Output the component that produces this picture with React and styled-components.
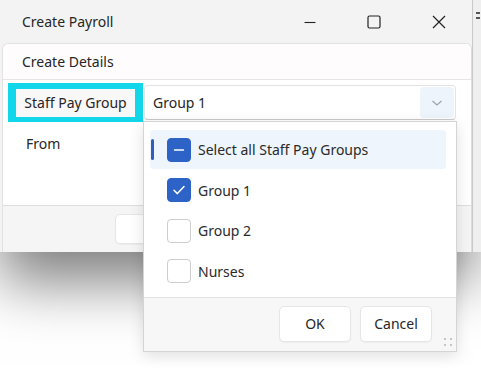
import React from "react";
import styled, { createGlobalStyle } from "styled-components";

const Global = createGlobalStyle`
  html, body { margin: 0; padding: 0; background: #ffffff; }
  body { font-family: "Noto Sans", "Open Sans", sans-serif; color: #262626; }
  * { box-sizing: border-box; }
`;

const Page = styled.div`
  position: relative;
  width: 481px;
  height: 385px;
  overflow: hidden;
  background: #ffffff;
`;

const Top = styled.div`
  display: flex;
  align-items: flex-start;
`;

const Window = styled.div`
  width: 473px;
  height: 252px;
  background: #f3f3f3;
  border-right: 1px solid #c9c9c9;
  display: flex;
  flex-direction: column;
  box-shadow: 0 30px 55px rgba(0, 0, 0, 0.5);
  position: relative;
  z-index: 1;
`;

const Behind = styled.div`
  flex: 1;
  height: 252px;
  background: #efefef;
  display: flex;
  flex-direction: column;
  gap: 3px;
  padding: 12px 0 0 3px;
  position: relative;
  z-index: 2;
`;

const Dash = styled.span`
  display: block;
  width: 4px;
  height: 2px;
  background: #555;
`;

const TitleBar = styled.div`
  height: 43px;
  display: flex;
  align-items: center;
  padding-left: 22px;
  font-size: 14px;
  color: #262626;
`;

const Title = styled.span`
  flex: 1;
`;

const Controls = styled.div`
  display: flex;
  align-items: center;
  height: 100%;
`;

const Ctrl = styled.div`
  width: ${(p) => p.$w}px;
  height: 100%;
  display: flex;
  align-items: center;
  justify-content: center;
`;

const Card = styled.div`
  flex: 1;
  margin: 0 0 0 2px;
  background: #ffffff;
  border: 1px solid #e2e2e2;
  border-bottom: none;
  border-right-color: #dcdcdc;
  border-radius: 6px 6px 0 0;
  display: flex;
  flex-direction: column;
`;

const CardHeader = styled.div`
  height: 36px;
  display: flex;
  align-items: center;
  padding-left: 19px;
  font-size: 14px;
  color: #262626;
  background: #fefcfd;
  border-bottom: 1px solid #e6e6e6;
  border-radius: 6px 6px 0 0;
`;

const Form = styled.div`
  flex: 1;
  display: flex;
  flex-direction: column;
  padding: 2px 15px 0 5px;
`;

const Row = styled.div`
  display: flex;
  align-items: center;
  height: ${(p) => p.$h}px;
`;

const Highlight = styled.div`
  width: 135px;
  height: 39px;
  background: #12d6e9;
  display: flex;
  align-items: center;
  justify-content: center;
`;

const LabelBox = styled.div`
  width: 119px;
  height: 28px;
  background: #f8f8f8;
  display: flex;
  align-items: center;
  justify-content: center;
  font-size: 14px;
  color: #262626;
  white-space: nowrap;
`;

const PlainLabel = styled.div`
  padding-left: 18px;
  font-size: 14px;
  color: #262626;
`;

const Combo = styled.div`
  flex: 1;
  height: 35px;
  margin-left: 1px;
  border: 1px solid #e3e3e3;
  border-bottom-color: #c9c9c9;
  border-radius: 4px;
  background: #fff;
  display: flex;
  align-items: center;
  padding: 0 1px 0 8px;
  font-size: 14px;
`;

const ComboText = styled.span`
  flex: 1;
`;

const ComboBtn = styled.div`
  width: 34px;
  height: 31px;
  border-radius: 4px;
  background: #eef4fb;
  display: flex;
  align-items: center;
  justify-content: center;
`;

const Footer = styled.div`
  height: 47px;
  background: #f5f5f5;
  border-top: 1px solid #dedede;
  display: flex;
  align-items: center;
  padding-left: 112px;
`;

const Button = styled.div`
  width: ${(p) => p.$w}px;
  height: ${(p) => p.$h}px;
  background: #ffffff;
  border: 1px solid #e6e6e6;
  border-radius: 5px;
  display: flex;
  align-items: center;
  justify-content: center;
  font-size: 14px;
  color: #262626;
  box-shadow: 0 1px 1px rgba(0, 0, 0, 0.04);
`;

const Popup = styled.div`
  position: absolute;
  left: 143px;
  top: 121px;
  width: 314px;
  height: 231px;
  background: #ffffff;
  border: 1px solid #d4d4d4;
  box-shadow: 0 4px 14px rgba(0, 0, 0, 0.12);
  display: flex;
  flex-direction: column;
  z-index: 3;
`;

const List = styled.div`
  flex: 1;
  display: flex;
  flex-direction: column;
  gap: 1.67px;
  padding: 8px 10px 0 6px;
`;

const Item = styled.div`
  position: relative;
  height: 39px;
  display: flex;
  align-items: center;
  gap: 7px;
  padding-left: 17px;
  border-radius: 4px;
  font-size: 14px;
  color: #2a2a2a;
  background: ${(p) => (p.$active ? "#eff5fc" : "transparent")};
`;

const Indicator = styled.span`
  position: absolute;
  left: 1px;
  top: 9px;
  width: 3px;
  height: 21px;
  border-radius: 2px;
  background: #2f5fb9;
`;

const Box = styled.span`
  width: 24px;
  height: 24px;
  border-radius: 4px;
  display: flex;
  align-items: center;
  justify-content: center;
  background: ${(p) => (p.$on ? "#2d63c7" : "#ffffff")};
  border: 1px solid ${(p) => (p.$on ? "#2d63c7" : "#cdcdcd")};
`;

const PopupFooter = styled.div`
  height: 54px;
  background: #f7f7f7;
  border-top: 1px solid #e3e3e3;
  display: flex;
  align-items: center;
  justify-content: flex-end;
  gap: 9px;
  padding: 0 24px 2px 0;
  position: relative;
`;

const Grip = styled.svg`
  position: absolute;
  right: 3px;
  bottom: 4px;
`;

const Minus = () => (
  <svg width="12" height="12" viewBox="0 0 12 12">
    <line x1="1.5" y1="6" x2="10.5" y2="6" stroke="#fff" strokeWidth="1.4" strokeLinecap="round" />
  </svg>
);

const Check = () => (
  <svg width="14" height="14" viewBox="0 0 14 14">
    <path d="M2 7.3 L5.4 10.6 L12 3.6" fill="none" stroke="#fff" strokeWidth="1.5" strokeLinecap="round" strokeLinejoin="round" />
  </svg>
);

const items = [
  { label: "Select all Staff Pay Groups", state: "mixed", active: true },
  { label: "Group 1", state: "on" },
  { label: "Group 2", state: "off" },
  { label: "Nurses", state: "off" },
];

export default function App() {
  return (
    <>
      <Global />
      <Page>
        <Top>
          <Window>
            <TitleBar>
              <Title>Create Payroll</Title>
              <Controls>
                <Ctrl $w={64}>
                  <svg width="12" height="12" viewBox="0 0 12 12">
                    <line x1="0.5" y1="6.5" x2="11.5" y2="6.5" stroke="#222" strokeWidth="1.1" />
                  </svg>
                </Ctrl>
                <Ctrl $w={64}>
                  <svg width="14" height="14" viewBox="0 0 14 14">
                    <rect x="1" y="1" width="12" height="12" rx="1.5" fill="none" stroke="#222" strokeWidth="1.2" />
                  </svg>
                </Ctrl>
                <Ctrl $w={66}>
                  <svg width="14" height="14" viewBox="0 0 14 14">
                    <path d="M1 1 L13 13 M13 1 L1 13" stroke="#222" strokeWidth="1.2" />
                  </svg>
                </Ctrl>
              </Controls>
            </TitleBar>
            <Card>
              <CardHeader>Create Details</CardHeader>
              <Form>
                <Row $h={41}>
                  <Highlight>
                    <LabelBox>Staff Pay Group</LabelBox>
                  </Highlight>
                  <Combo>
                    <ComboText>Group 1</ComboText>
                    <ComboBtn>
                      <svg width="12" height="8" viewBox="0 0 12 8">
                        <path d="M1.5 2 L6 6 L10.5 2" fill="none" stroke="#9aa3ad" strokeWidth="1.2" />
                      </svg>
                    </ComboBtn>
                  </Combo>
                </Row>
                <Row $h={40}>
                  <PlainLabel>From</PlainLabel>
                </Row>
              </Form>
              <Footer>
                <Button $w={80} $h={30} />
              </Footer>
            </Card>
          </Window>
          <Behind>
            <Dash />
            <Dash />
          </Behind>
        </Top>
        <Popup>
          <List>
            {items.map((it) => (
              <Item key={it.label} $active={it.active}>
                {it.active && <Indicator />}
                <Box $on={it.state !== "off"}>
                  {it.state === "mixed" && <Minus />}
                  {it.state === "on" && <Check />}
                </Box>
                {it.label}
              </Item>
            ))}
          </List>
          <PopupFooter>
            <Button $w={72} $h={36}>OK</Button>
            <Button $w={72} $h={36}>Cancel</Button>
            <Grip width="10" height="10" viewBox="0 0 10 10">
              <circle cx="2" cy="2" r="1" fill="#b5b5b5" />
              <circle cx="8" cy="2" r="1" fill="#b5b5b5" />
              <circle cx="2" cy="8" r="1" fill="#b5b5b5" />
              <circle cx="8" cy="8" r="1" fill="#b5b5b5" />
            </Grip>
          </PopupFooter>
        </Popup>
      </Page>
    </>
  );
}
